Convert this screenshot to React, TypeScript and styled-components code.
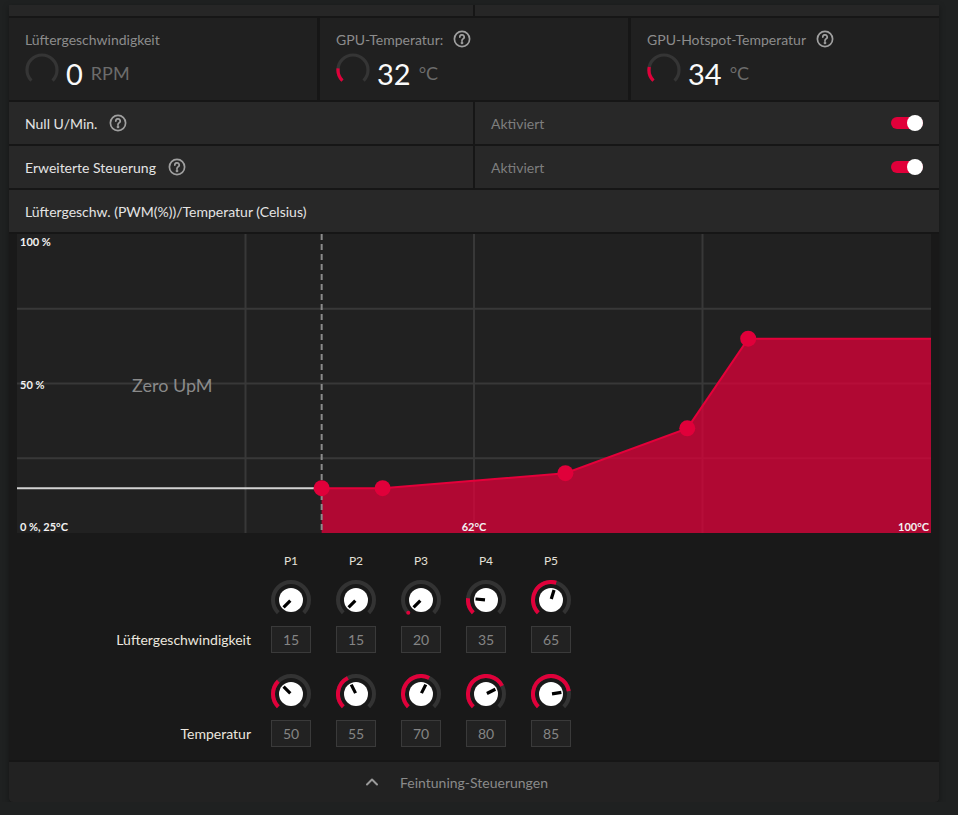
import { Fragment } from 'react';
import styled, { createGlobalStyle } from 'styled-components';

const GlobalStyle = createGlobalStyle`
  body {
    margin: 0;
    background: #1f2121;
    font-family: Lato, "Noto Sans", sans-serif;
    color: #e0e0e0;
  }
`;

const RED = '#e0003a';

const Panel = styled.div`
  margin: 5px 0 0 9px;
  width: 930px;
  display: flex;
  flex-direction: column;
  gap: 2px;
  background: #161616;
  border-radius: 0 0 4px 4px;
  box-shadow: 0 2px 6px rgba(0, 0, 0, 0.35);
`;

const Strip = styled.div`
  height: 11px;
  display: grid;
  grid-template-columns: 1fr 1fr;
  gap: 2px;

  div {
    background: #262626;
  }
`;

const Cards = styled.div`
  display: grid;
  grid-template-columns: repeat(3, 1fr);
  gap: 3px;
`;

const Card = styled.div`
  height: 82px;
  box-sizing: border-box;
  padding: 12px 16px 0;
  background: #202020;
`;

const CardLabel = styled.div`
  display: flex;
  align-items: center;
  gap: 10px;
  height: 18px;
  font-size: 14px;
  color: #8c8c8c;
`;

const Reading = styled.div`
  display: flex;
  align-items: center;
  margin-top: 5px;
  height: 34px;
`;

const Value = styled.span`
  margin-left: 7px;
  margin-top: 6px;
  font-size: 29px;
  color: #fafafa;
`;

const Unit = styled.span`
  margin-left: 8px;
  margin-top: 6px;
  font-size: 18px;
  color: #6c6c6c;
`;

const Row = styled.div<{ $split?: boolean }>`
  height: 42px;
  display: grid;
  grid-template-columns: ${(p) => (p.$split ? '1fr 1fr' : '1fr')};
  gap: 2px;
`;

const Cell = styled.div`
  display: flex;
  align-items: center;
  gap: 12px;
  padding: 0 16px;
  background: #282828;
  font-size: 14px;
  color: #e4e4e4;
`;

const Muted = styled.span`
  flex: 1;
  color: #7e7e7e;
`;

const Toggle = styled.div`
  position: relative;
  width: 32px;
  height: 12px;
  border-radius: 6px;
  background: ${RED};

  &::after {
    content: '';
    position: absolute;
    right: 0;
    top: -2px;
    width: 16px;
    height: 16px;
    border-radius: 50%;
    background: #fff;
  }
`;

const CurveSection = styled.div`
  background: #191919;
  display: flex;
  flex-direction: column;
`;

const Chart = styled.svg`
  display: block;
  margin: 0 8px;
  background: #212121;
  font-family: Lato, "Noto Sans", sans-serif;
`;

const Controls = styled.div`
  padding: 20px 0 13px;
  display: flex;
  flex-direction: column;
`;

const ControlLine = styled.div<{ $top?: number }>`
  display: flex;
  align-items: center;
  gap: 20px;
  margin-top: ${(p) => p.$top ?? 0}px;
`;

const LineLabel = styled.div`
  width: 242px;
  text-align: right;
  font-size: 14px;
  color: #ebe7df;
`;

const Columns = styled.div`
  display: flex;
  gap: 25px;
`;

const PointName = styled.div`
  width: 40px;
  height: 16px;
  line-height: 16px;
  text-align: center;
  font-size: 12px;
  color: #e4e0d8;
`;

const Box = styled.div`
  width: 40px;
  height: 27px;
  box-sizing: border-box;
  border: 1px solid #3a3a3a;
  background: #222;
  display: flex;
  align-items: center;
  justify-content: center;
  font-size: 14px;
  color: #858585;
`;

const Footer = styled.div`
  height: 40px;
  display: grid;
  grid-template-columns: 1fr auto 1fr;
  align-items: center;
  background: #222;
  border-radius: 0 0 4px 4px;
  font-size: 14px;
  color: #8a8a8a;

  svg {
    justify-self: end;
    margin-right: 20px;
  }
`;

function polar(c: number, r: number, deg: number) {
  const a = (deg * Math.PI) / 180;
  return [c + r * Math.sin(a), c - r * Math.cos(a)];
}

function arc(c: number, r: number, from: number, to: number) {
  const [x0, y0] = polar(c, r, from);
  const [x1, y1] = polar(c, r, to);
  const large = to - from > 180 ? 1 : 0;
  return `M${x0} ${y0}A${r} ${r} 0 ${large} 1 ${x1} ${y1}`;
}

function HelpIcon() {
  return (
    <svg width="18" height="18" viewBox="0 0 18 18" fill="none" stroke="#a0a0a0" strokeWidth="1.7" strokeLinecap="round">
      <circle cx="9" cy="9" r="7.6" />
      <path d="M6.8 7.1a2.2 2.2 0 1 1 3.1 1.9c-.6.3-.9.7-.9 1.4v.5" />
      <circle cx="9" cy="12.9" r="0.5" fill="#a0a0a0" />
    </svg>
  );
}

function Gauge({ fraction }: { fraction: number }) {
  const end = -135 + 270 * fraction;
  return (
    <svg width="34" height="34" viewBox="0 0 34 34" fill="none" strokeWidth="3.2">
      <path d={arc(17, 15, -135, 135)} stroke="#353535" />
      {fraction > 0 && <path d={arc(17, 15, -135, end)} stroke={RED} />}
    </svg>
  );
}

function Knob({ value, min, max }: { value: number; min: number; max: number }) {
  const f = (value - min) / (max - min);
  const angle = -135 + 270 * Math.max(0, f);
  const [sx, sy] = polar(20, 18, -135);
  const [px0, py0] = polar(20, 1, angle);
  const [px1, py1] = polar(20, 10.5, angle);
  return (
    <svg width="40" height="40" viewBox="0 0 40 40" fill="none">
      <path d={arc(20, 18, -135, 135)} stroke="#333" strokeWidth="4" />
      {f > 0 && <path d={arc(20, 18, -135, angle)} stroke={RED} strokeWidth="4" />}
      {f === 0 && <circle cx={sx} cy={sy} r="2" fill={RED} />}
      <circle cx="20" cy="20" r="12" fill="#fff" />
      <line x1={px0} y1={py0} x2={px1} y2={py1} stroke="#000" strokeWidth="3.2" />
    </svg>
  );
}

const W = 914;
const H = 299;
const tx = (t: number) => ((t - 25) / 75) * W;
const sy = (s: number) => H - (s / 100) * H;

const points = [
  { name: 'P1', speed: 15, temp: 50 },
  { name: 'P2', speed: 15, temp: 55 },
  { name: 'P3', speed: 20, temp: 70 },
  { name: 'P4', speed: 35, temp: 80 },
  { name: 'P5', speed: 65, temp: 85 },
];

function FanCurve() {
  const first = points[0];
  const last = points[points.length - 1];
  const line = points.map((p) => `${tx(p.temp)},${sy(p.speed)}`).join(' ');
  const area = `${tx(first.temp)},${H} ${line} ${W},${sy(last.speed)} ${W},${H}`;
  const labelStyle = { fontSize: 11, fontWeight: 700, fill: '#f2f2f2' };
  return (
    <Chart width={W} height={H} viewBox={`0 0 ${W} ${H}`}>
      {[1, 2, 3].map((i) => (
        <Fragment key={i}>
          <line x1={(W / 4) * i} y1="0" x2={(W / 4) * i} y2={H} stroke="#383838" strokeWidth="2" />
          <line x1="0" y1={(H / 4) * i} x2={W} y2={(H / 4) * i} stroke="#383838" strokeWidth="2" />
        </Fragment>
      ))}
      <text x={tx(first.temp) / 2 + 3} y="158" textAnchor="middle" fontSize="18" fill="#8a8a8a">
        Zero UpM
      </text>
      <polygon points={area} fill={RED} fillOpacity="0.75" />
      <line x1="0" y1={sy(first.speed)} x2={tx(first.temp)} y2={sy(first.speed)} stroke="#d2d2d2" strokeWidth="2" />
      <polyline points={`${line} ${W},${sy(last.speed)}`} fill="none" stroke="#e4003a" strokeWidth="2" />
      <line x1={tx(first.temp)} y1="0" x2={tx(first.temp)} y2={H} stroke="#8c8c8c" strokeWidth="2" strokeDasharray="6 4" />
      {points.map((p) => (
        <circle key={p.name} cx={tx(p.temp)} cy={sy(p.speed)} r="8" fill={RED} />
      ))}
      <text x="3" y="12" style={labelStyle}>100 %</text>
      <text x="3" y="155" style={labelStyle}>50 %</text>
      <text x="3" y="297" style={labelStyle}>0 %, 25°C</text>
      <text x={W / 2} y="297" textAnchor="middle" style={labelStyle}>62°C</text>
      <text x={W - 2} y="297" textAnchor="end" style={labelStyle}>100°C</text>
    </Chart>
  );
}

export default function App() {
  return (
    <>
      <GlobalStyle />
      <Panel>
        <Strip>
          <div />
          <div />
        </Strip>
        <Cards>
          <Card>
            <CardLabel>Lüftergeschwindigkeit</CardLabel>
            <Reading>
              <Gauge fraction={0} />
              <Value>0</Value>
              <Unit>RPM</Unit>
            </Reading>
          </Card>
          <Card>
            <CardLabel>
              GPU-Temperatur: <HelpIcon />
            </CardLabel>
            <Reading>
              <Gauge fraction={0.19} />
              <Value>32</Value>
              <Unit>°C</Unit>
            </Reading>
          </Card>
          <Card>
            <CardLabel>
              GPU-Hotspot-Temperatur <HelpIcon />
            </CardLabel>
            <Reading>
              <Gauge fraction={0.21} />
              <Value>34</Value>
              <Unit>°C</Unit>
            </Reading>
          </Card>
        </Cards>
        <Row $split>
          <Cell>
            Null U/Min. <HelpIcon />
          </Cell>
          <Cell>
            <Muted>Aktiviert</Muted>
            <Toggle />
          </Cell>
        </Row>
        <Row $split>
          <Cell>
            Erweiterte Steuerung <HelpIcon />
          </Cell>
          <Cell>
            <Muted>Aktiviert</Muted>
            <Toggle />
          </Cell>
        </Row>
        <Row>
          <Cell>Lüftergeschw. (PWM(%))/Temperatur (Celsius)</Cell>
        </Row>
        <CurveSection>
          <FanCurve />
          <Controls>
            <ControlLine>
              <LineLabel />
              <Columns>
                {points.map((p) => (
                  <PointName key={p.name}>{p.name}</PointName>
                ))}
              </Columns>
            </ControlLine>
            <ControlLine $top={11}>
              <LineLabel />
              <Columns>
                {points.map((p) => (
                  <Knob key={p.name} value={p.speed} min={20} max={100} />
                ))}
              </Columns>
            </ControlLine>
            <ControlLine $top={6}>
              <LineLabel>Lüftergeschwindigkeit</LineLabel>
              <Columns>
                {points.map((p) => (
                  <Box key={p.name}>{p.speed}</Box>
                ))}
              </Columns>
            </ControlLine>
            <ControlLine $top={21}>
              <LineLabel />
              <Columns>
                {points.map((p) => (
                  <Knob key={p.name} value={p.temp} min={25} max={100} />
                ))}
              </Columns>
            </ControlLine>
            <ControlLine $top={6}>
              <LineLabel>Temperatur</LineLabel>
              <Columns>
                {points.map((p) => (
                  <Box key={p.name}>{p.temp}</Box>
                ))}
              </Columns>
            </ControlLine>
          </Controls>
        </CurveSection>
        <Footer>
          <svg width="16" height="16" viewBox="0 0 16 16" fill="none" stroke="#9a9a9a" strokeWidth="2" strokeLinecap="round" strokeLinejoin="round">
            <path d="M3 10.5l5-5 5 5" />
          </svg>
          <span>Feintuning-Steuerungen</span>
          <span />
        </Footer>
      </Panel>
    </>
  );
}
